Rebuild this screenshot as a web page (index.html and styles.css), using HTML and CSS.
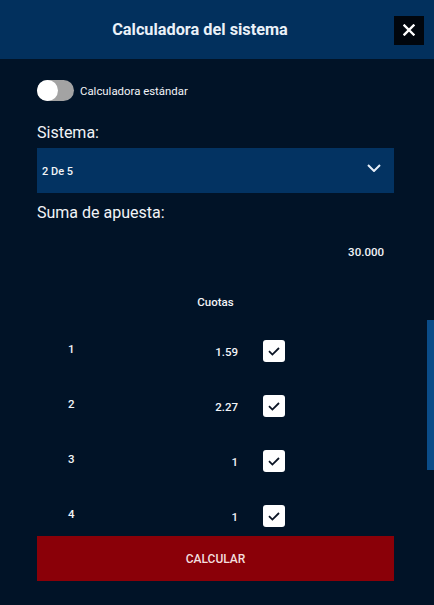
FILE: index.html
```html
<!DOCTYPE html>
<html lang="es">
<head>
<meta charset="utf-8">
<title>Calculadora del sistema</title>
<link rel="stylesheet" href="styles.css">
</head>
<body>
<div class="modal">
  <header class="modal-header">
    <h1 class="modal-title">Calculadora del sistema</h1>
    <button class="close-btn" aria-label="Cerrar">
      <svg width="12" height="12" viewBox="0 0 12 12"><path d="M1.5 1.5 L10.5 10.5 M10.5 1.5 L1.5 10.5" stroke="#fff" stroke-width="2.4" stroke-linecap="square" fill="none"/></svg>
    </button>
  </header>
  <main class="modal-body">
    <label class="toggle-row">
      <span class="toggle"><span class="knob"></span></span>
      <span class="toggle-label">Calculadora estándar</span>
    </label>

    <div class="field-label">Sistema:</div>
    <div class="select">
      <span class="select-value">2 De 5</span>
      <svg class="chevron" width="14" height="8" viewBox="0 0 14 8"><path d="M1 1 L7 7 L13 1" stroke="#e6eef7" stroke-width="2" fill="none"/></svg>
    </div>

    <div class="field-label label-stake">Suma de apuesta:</div>
    <div class="stake">30.000</div>

    <div class="odds-title">Cuotas</div>
    <div class="odds-list">
      <div class="odds-row"><span class="num">1</span><span class="odd">1.59</span><span class="check"><svg width="22" height="22" viewBox="0 0 22 22"><path d="M6 11.2 L9.4 14.6 L16 8" stroke="#0b1424" stroke-width="1.8" fill="none"/></svg></span></div>
      <div class="odds-row"><span class="num">2</span><span class="odd">2.27</span><span class="check"><svg width="22" height="22" viewBox="0 0 22 22"><path d="M6 11.2 L9.4 14.6 L16 8" stroke="#0b1424" stroke-width="1.8" fill="none"/></svg></span></div>
      <div class="odds-row"><span class="num">3</span><span class="odd">1</span><span class="check"><svg width="22" height="22" viewBox="0 0 22 22"><path d="M6 11.2 L9.4 14.6 L16 8" stroke="#0b1424" stroke-width="1.8" fill="none"/></svg></span></div>
      <div class="odds-row"><span class="num">4</span><span class="odd">1</span><span class="check"><svg width="22" height="22" viewBox="0 0 22 22"><path d="M6 11.2 L9.4 14.6 L16 8" stroke="#0b1424" stroke-width="1.8" fill="none"/></svg></span></div>
    </div>

    <button class="calc-btn">CALCULAR</button>
  </main>
  <div class="scroll-thumb"></div>
</div>
</body>
</html>
```

FILE: styles.css
```css
* { box-sizing: border-box; }
html, body {
  margin: 0;
  padding: 0;
  background: #011327;
  font-family: Roboto, "Liberation Sans", sans-serif;
  color: #f2f4f7;
}
.modal {
  position: relative;
  width: 434px;
  height: 605px;
  overflow: hidden;
  background: #011327;
}
.modal-header {
  height: 59px;
  background: #02305d;
  display: flex;
  align-items: center;
  padding: 0 10px 0 6px;
}
.modal-title {
  flex: 1;
  margin: 0;
  text-align: center;
  font-size: 16.3px;
  font-weight: 700;
  color: #eaf1f8;
}
.close-btn {
  width: 30px;
  height: 29px;
  margin-top: 1px;
  border: none;
  padding: 0;
  background: #01060d;
  display: flex;
  align-items: center;
  justify-content: center;
}
.modal-body {
  padding: 21px 40px 0 37px;
  display: flex;
  flex-direction: column;
}
.toggle-row {
  display: flex;
  align-items: center;
  gap: 6px;
  height: 21px;
}
.toggle {
  width: 37px;
  height: 21px;
  border-radius: 11px;
  background: #a3a3a3;
  position: relative;
  display: block;
}
.knob {
  position: absolute;
  left: 0;
  top: 0;
  width: 21px;
  height: 21px;
  border-radius: 50%;
  background: #ffffff;
}
.toggle-label {
  font-size: 11.4px;
  color: #f2f4f7;
}
.field-label {
  font-size: 16px;
  line-height: 20px;
  margin-top: 22px;
  color: #f2f4f7;
}
.select {
  margin-top: 5px;
  height: 45px;
  background: #033362;
  display: flex;
  align-items: center;
  justify-content: space-between;
  padding: 0 13px 0 5px;
}
.select-value {
  font-size: 11px;
  font-weight: 500;
  margin-top: 1px;
}
.chevron { margin-top: -6px; }
.label-stake { margin-top: 10px; }
.stake {
  margin-top: 22px;
  text-align: right;
  padding-right: 10px;
  font-size: 11.5px;
  line-height: 14px;
  font-weight: 500;
}
.odds-title {
  margin-top: 36px;
  text-align: center;
  font-size: 11.5px;
  line-height: 14px;
  font-weight: 500;
}
.odds-list {
  margin-top: 31px;
  display: flex;
  flex-direction: column;
  gap: 33px;
}
.odds-row {
  display: flex;
  align-items: center;
  height: 22px;
  padding-left: 31px;
  padding-right: 109px;
}
.num {
  flex: 1;
  align-self: flex-start;
  font-size: 11.5px;
  line-height: 14px;
  font-weight: 500;
  margin-top: 2px;
}
.odd {
  font-size: 11.5px;
  line-height: 14px;
  font-weight: 500;
  margin-top: 2px;
}
.check {
  margin-left: 25px;
  width: 22px;
  height: 22px;
  background: #ffffff;
  border-radius: 3px;
  display: block;
}
.check svg { display: block; }
.calc-btn {
  margin-top: 9px;
  height: 45px;
  border: none;
  background: #8a0008;
  color: #f3dede;
  font-family: Roboto, "Liberation Sans", sans-serif;
  font-size: 12px;
  font-weight: 500;
}
.scroll-thumb {
  position: absolute;
  right: 0;
  top: 320px;
  width: 7px;
  height: 150px;
  background: #0a4c88;
}
```
